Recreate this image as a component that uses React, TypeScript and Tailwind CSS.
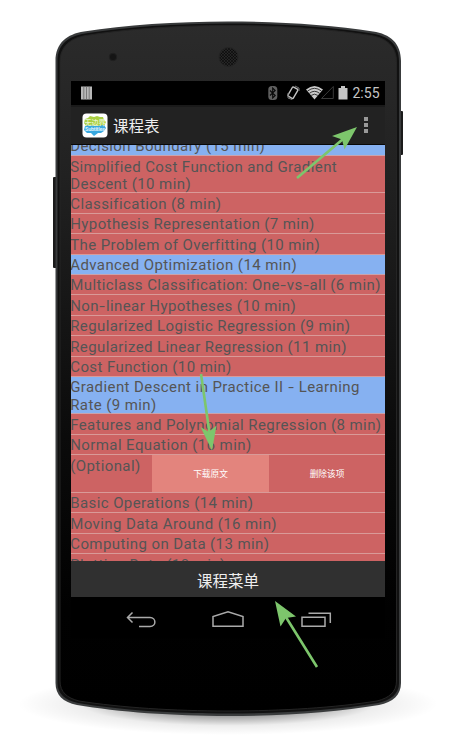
import React from "react";

type Row = { lines: string[]; blue?: boolean; height: string };

const rows: Row[] = [
  { lines: ["Decision Boundary (15 min)"], blue: true, height: "h-[20.4px]" },
  { lines: ["Simplified Cost Function and Gradient", "Descent (10 min)"], height: "h-[37.4px]" },
  { lines: ["Classification (8 min)"], height: "h-[20.4px]" },
  { lines: ["Hypothesis Representation (7 min)"], height: "h-[20.4px]" },
  { lines: ["The Problem of Overfitting (10 min)"], height: "h-[20.4px]" },
  { lines: ["Advanced Optimization (14 min)"], blue: true, height: "h-[20.4px]" },
  { lines: ["Multiclass Classification: One-vs-all (6 min)"], height: "h-[20.4px]" },
  { lines: ["Non-linear Hypotheses (10 min)"], height: "h-[20.4px]" },
  { lines: ["Regularized Logistic Regression (9 min)"], height: "h-[20.4px]" },
  { lines: ["Regularized Linear Regression (11 min)"], height: "h-[20.4px]" },
  { lines: ["Cost Function (10 min)"], height: "h-[20.4px]" },
  { lines: ["Gradient Descent in Practice II - Learning", "Rate (9 min)"], blue: true, height: "h-[37.4px]" },
  { lines: ["Features and Polynomial Regression (8 min)"], height: "h-[20.4px]" },
  { lines: ["Normal Equation (16 min)"], height: "h-[20.4px]" },
];

const lastRows: Row[] = [
  { lines: ["Basic Operations (14 min)"], height: "h-[20.4px]" },
  { lines: ["Moving Data Around (16 min)"], height: "h-[20.4px]" },
  { lines: ["Computing on Data (13 min)"], height: "h-[20.4px]" },
  { lines: ["Plotting Data (10 min)"], height: "h-[20.4px]" },
];

const cjk = "font-['Noto_Sans_CJK_SC',sans-serif]";

function Title({ text }: { text: string }) {
  return (
    <>
      {text.split("-").map((part, i) => (
        <React.Fragment key={i}>
          {i > 0 && <span className="mx-[1.2px] inline-block scale-x-[1.35]">-</span>}
          {part}
        </React.Fragment>
      ))}
    </>
  );
}

function ListRow({ row }: { row: Row }) {
  return (
    <div
      className={`${row.height} shrink-0 border-b pt-[2.5px] ${
        row.blue ? "border-[#c9a3ad] bg-[#86b1f1]" : "border-[#d99a98] bg-[#cd6363]"
      }`}
    >
      {row.lines.map((line) => (
        <div key={line} className="-ml-[0.8px] h-[17.3px] whitespace-pre leading-[17.3px]">
          <Title text={line} />
        </div>
      ))}
    </div>
  );
}

function PhoneBody() {
  return (
    <svg className="absolute inset-0" width="450" height="750" viewBox="0 0 450 750">
      <defs>
        <linearGradient id="body" x1="0" y1="0" x2="0" y2="1">
          <stop offset="0" stopColor="#2b2b2b" />
          <stop offset="0.22" stopColor="#212121" />
          <stop offset="0.6" stopColor="#0b0b0b" />
          <stop offset="0.85" stopColor="#010101" />
          <stop offset="1" stopColor="#000" />
        </linearGradient>
        <radialGradient id="shade">
          <stop offset="0" stopColor="#000" stopOpacity="0.9" />
          <stop offset="0.4" stopColor="#000" stopOpacity="0.36" />
          <stop offset="0.7" stopColor="#000" stopOpacity="0.07" />
          <stop offset="1" stopColor="#000" stopOpacity="0" />
        </radialGradient>
        <pattern id="grille" width="3" height="3" patternUnits="userSpaceOnUse">
          <rect width="3" height="3" fill="#262626" />
          <circle cx="1" cy="1" r="0.9" fill="#0a0a0a" />
          <circle cx="2.5" cy="2.5" r="0.7" fill="#0a0a0a" />
        </pattern>
      </defs>
      <ellipse cx="228" cy="704" rx="210" ry="31" fill="url(#shade)" />
      <rect x="53" y="177" width="4" height="91" rx="1" fill="#1b1b1b" />
      <rect x="399" y="111" width="4" height="44" rx="1" fill="#1b1b1b" />
      <path
        d="M55.5 61C55.5 43 67 34 84 31.5C125 25 176 21.5 228 21.5S331 25 373 31.5C390 34 401 43 401 61V683C401 695 393 702 379 705C338 712 282 716 228 716S118 712 77 705C63 702 55.500 695 55.500 683Z"
        fill="#393b3c"
      />
      <path
        d="M57.500 61C57.500 44 69 36 85 33.500C126 27 176 23.500 228 23.500S331 27 372 33.500C388 36 399 44 399 61V683C399 694 391 700 378 703C337 710 282 713.500 228 713.500S119 710 78 703C65 700 57.500 694 57.500 683Z"
        fill="#111"
      />
      <path
        d="M60 62C60 46 71 38 86 35.500C127 29 176 25.500 228 25.500S330 29 371 35.500C386 38 396.500 46 396.500 62V681C396.500 692 389 698 377 701C336 707.500 282 711 228 711S120 707.500 79 701C67 698 60 692 60 681Z"
        fill="url(#body)"
        stroke="#242424"
        strokeWidth="1"
      />
      <circle cx="113" cy="57" r="3.700" fill="#151515" stroke="#202020" />
      <circle cx="228.500" cy="57" r="9.500" fill="url(#grille)" stroke="#242424" />
    </svg>
  );
}

function StatusBar() {
  return (
    <div className="flex h-[24px] shrink-0 items-center bg-black pl-[10px]">
      <svg width="12" height="14" viewBox="0 0 12 14">
        <path d="M0 .5H11V13.500H0Z" fill="#b8b8b8" />
        <path d="M2.800 .5V13.500M5.500 .5V13.500M8.200 .5V13.500" stroke="#6a6a6a" strokeWidth=".8" />
      </svg>
      <svg className="ml-[174px] shrink-0" width="84" height="18" viewBox="267 83 84 18">
        <rect x="268.300" y="85" width="9" height="14" rx="3.500" fill="#606060" />
        <path d="M270 89.500L275.200 94.500L272.700 97V87L275.200 89.500L270 94.500" fill="none" stroke="#080808" strokeWidth="1.100" />
        <g transform="rotate(30 293 91.500)">
          <rect x="289.900" y="86.500" width="6.200" height="10.500" rx="1" fill="none" stroke="#c4c4c4" strokeWidth="1.400" />
        </g>
        <path d="M288 92V97L292 98.500M295 85L299 87V90" fill="none" stroke="#777" />
        <path d="M306 88.500Q314.500 81.500 323 88.500L314.500 98.500Z" fill="#cacaca" />
        <g fill="none" stroke="#111" strokeWidth=".8">
          <path d="M307.500 90.100Q314.500 84.500 321.500 90.100" />
          <path d="M309.400 92.300Q314.500 88.300 319.600 92.300" />
          <path d="M311.200 94.400Q314.500 91.900 317.800 94.400" />
        </g>
        <path d="M321.500 97.500H333.300V85.500Z" fill="none" stroke="#393939" />
        <path d="M338.500 87H341V85H345V87H347.500V98.500H338.500Z" fill="#c6c6c6" />
      </svg>
      <span className="ml-[1.500px] font-[Roboto,sans-serif] text-[14px] leading-[20px] text-[#c5c5c5]">2:55</span>
    </div>
  );
}

function AppIcon() {
  return (
    <svg width="26" height="26" viewBox="0 0 26 26">
      <rect x=".5" y=".5" width="25" height="24" rx="4" fill="#fff" />
      <path d="M3 6L6 5 8 3 12 4 15 3 18 4 21 4 22 7 24 9 22 13H4L2 10Z" fill="#a9cf42" />
      <path d="M3 13L7 12 13 13 22 12 24 15 22 18 19 20 16 20 12 23 9 20 5 20 2 17Z" fill="#38a8e0" />
      <text x="13" y="11.500" textAnchor="middle" fontSize="7" fontWeight="500" fill="#eaf5ce" fontFamily="Noto Sans CJK SC, sans-serif">无边界</text>
      <text x="13" y="18" textAnchor="middle" fontSize="5.500" fontWeight="700" fill="#ddf2fb" textLength="20" fontFamily="Roboto, sans-serif">Subtitles</text>
    </svg>
  );
}

function Arrows() {
  return (
    <svg className="pointer-events-none absolute inset-0" width="450" height="750" viewBox="0 0 450 750">
      <g stroke="#7dc66c" strokeWidth="2.600" fill="none">
        <path d="M297 178L346 136.500M201 374L209.500 433M317 667L284 614" />
      </g>
      <g fill="#7dc66c">
        <path d="M357 127L332 136L342 139.500L344.500 149.500Z" />
        <path d="M212 450.500L200.500 427L209 432L216.500 425.500Z" />
        <path d="M275 601L280.500 626.500L286 618L296 616.500Z" />
      </g>
    </svg>
  );
}

export default function App() {
  return (
    <main className="relative h-[750px] w-[450px] overflow-hidden bg-white pl-[71px] pt-[81px]">
      <PhoneBody />
      <div className="relative flex h-[557px] w-[314px] flex-col overflow-hidden bg-black">
        <StatusBar />
        <header className="flex h-[40px] shrink-0 items-center border-b border-t-2 border-b-[#080808] border-t-[#1a1a1a] bg-[#222] pl-[11px] pr-[17px]">
          <AppIcon />
          <h1 className={`ml-[5px] pb-[2px] text-[15.5px] font-normal leading-[24px] text-[#eee] ${cjk}`}>课程表</h1>
          <div className="ml-auto flex flex-col gap-[2px] pb-[2px]">
            <i className="size-[4px] bg-[#999]" />
            <i className="size-[4px] bg-[#999]" />
            <i className="size-[4px] bg-[#999]" />
          </div>
        </header>
        <section className="flex h-[416px] shrink-0 flex-col overflow-hidden font-[Roboto,sans-serif] text-[15px] tracking-[0.41px] text-[#555]">
          <div className="-mt-[9.4px] flex flex-col">
            {rows.map((row) => (
              <ListRow key={row.lines[0]} row={row} />
            ))}
            <div className="flex h-[37.8px] shrink-0 border-b border-[#d99a98] bg-[#cd6363]">
              <div className="w-[81px] pt-[2.5px] leading-[17.3px]">
                <div className="-ml-[0.8px]">(Optional)</div>
              </div>
              <div className={`flex w-[117px] items-center justify-center bg-[#e3847d] text-[8.7px] tracking-normal text-white ${cjk}`}>下载原文</div>
              <div className={`flex flex-1 items-center justify-center text-[8.7px] tracking-normal text-white ${cjk}`}>删除该项</div>
            </div>
            {lastRows.map((row) => (
              <ListRow key={row.lines[0]} row={row} />
            ))}
          </div>
        </section>
        <footer className={`flex h-[36px] shrink-0 items-center justify-center bg-[#303030] pt-[2px] text-[15.5px] leading-[24px] text-[#eee] ${cjk}`}>
          课程菜单
        </footer>
        <nav className="h-[41px] shrink-0">
          <svg width="314" height="41" viewBox="71 597 314 41" fill="none" stroke="#aaa" strokeWidth="1.500">
            <path d="M132.500 612.500L127.500 617.500L132.500 622.500M128 617.500H150C156.500 617.500 156.500 626.500 150 626.500H139" />
            <path d="M213 626.300V616.500L228 611.700L243 616.500V626.300Z" />
            <path d="M302 617.300H325V626.300H302ZM308.500 613.300H330.300V623" />
          </svg>
        </nav>
      </div>
      <Arrows />
    </main>
  );
}
